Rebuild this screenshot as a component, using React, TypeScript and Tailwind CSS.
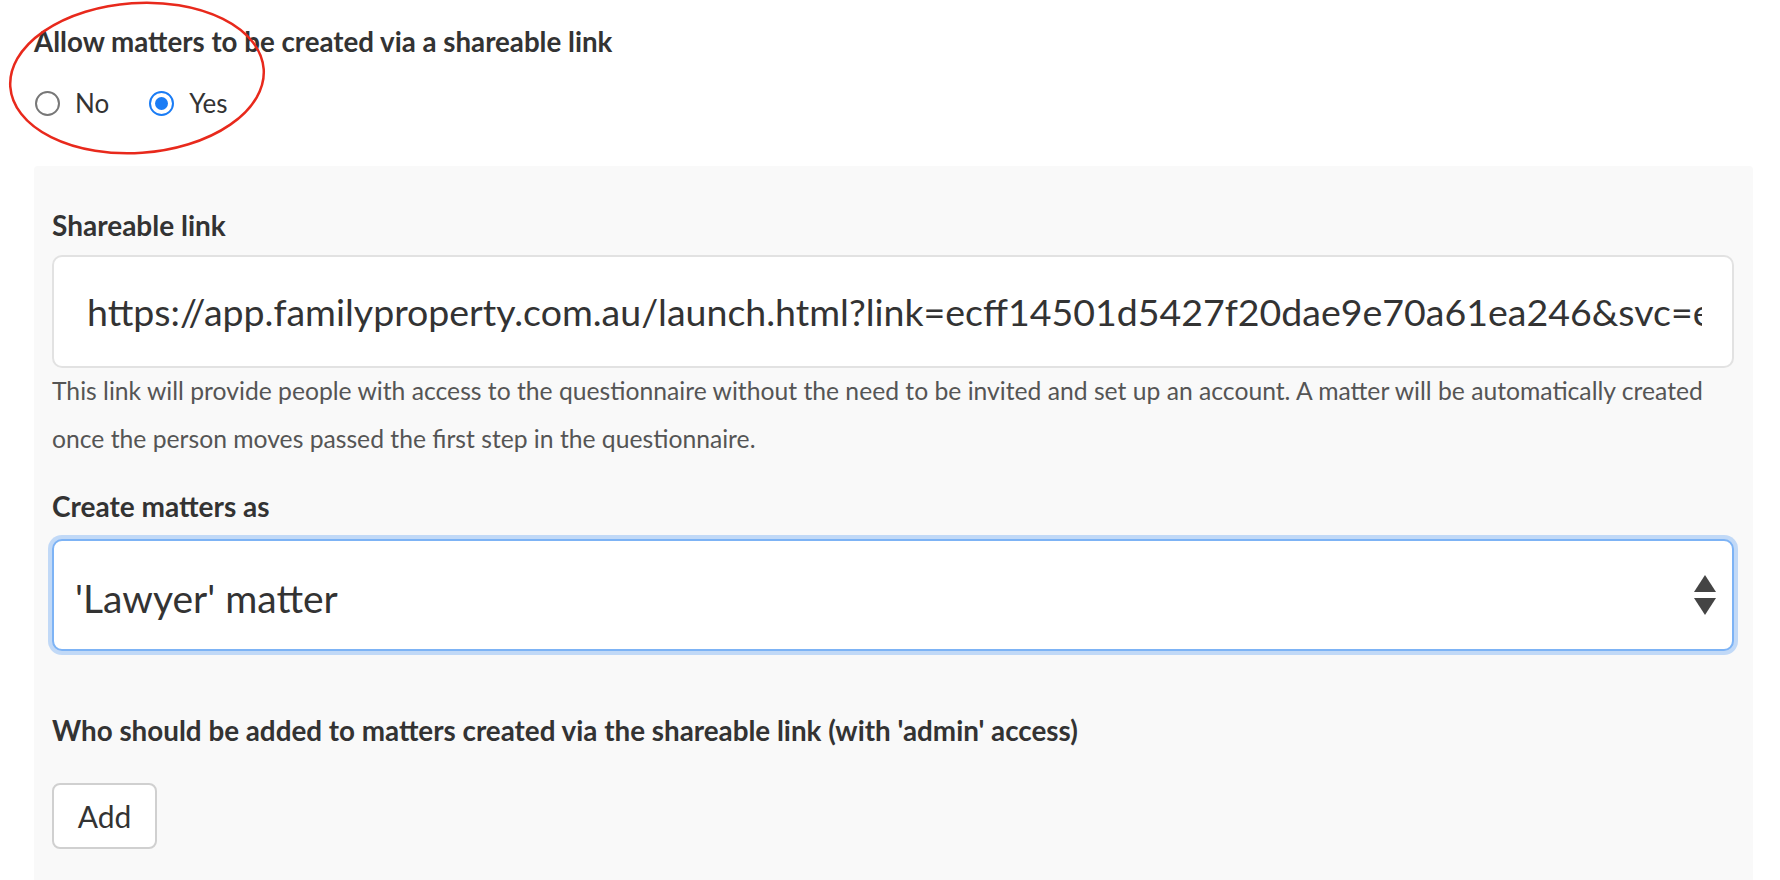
import React from "react"

const font = { fontFamily: "Lato, 'Open Sans', sans-serif" }

const Radio = ({ label, checked }: { label: string; checked?: boolean }) => (
    <label className="flex items-center gap-[15px]">
        {checked ? (
            <span className="w-[25px] h-[25px] rounded-full border-2 border-[#1a7cf5] bg-white flex items-center justify-center">
                <span className="w-[13px] h-[13px] rounded-full bg-[#1a7cf5]" />
            </span>
        ) : (
            <span className="w-[25px] h-[25px] rounded-full border-2 border-[#777] bg-white" />
        )}
        <span className="text-[26px] leading-[30px] text-[#333]">{label}</span>
    </label>
)

const SortArrows = () => (
    <svg width="24" height="40" viewBox="0 0 24 40" className="shrink-0">
        <path d="M12 0 L23 17 L1 17 Z" fill="#444" />
        <path d="M1 23 L23 23 L12 40 Z" fill="#444" />
    </svg>
)

export default function App() {
    const url = "https://app.familyproperty.com.au/launch.html?link=ecff14501d5427f20dae9e70a61ea246&svc=ecff14501d5427"

    return (
        <div className="relative min-h-[880px] bg-white pl-[34px] pr-[27px] pt-[27px] text-[#333]" style={font}>
            {/* annotation ring round the radios */}
            <svg className="absolute left-[6px] top-0 pointer-events-none" width="264" height="160" viewBox="0 0 264 160">
                <ellipse cx="131" cy="78" rx="127" ry="75" fill="none" stroke="#e8291c" strokeWidth="2.5" transform="rotate(-4 131 78)" />
            </svg>

            <h2 className="text-[27.7px] leading-[30px] font-bold">Allow matters to be created via a shareable link</h2>
            <div className="mt-[31px] flex items-center gap-[40px] pl-[1px]">
                <Radio label="No" />
                <Radio label="Yes" checked />
            </div>

            <div className="mt-[48px] bg-[#f9f9f9] rounded-t-[4px] pl-[18px] pr-[19px] pt-[44px] pb-[40px]">
                <h3 className="text-[28px] leading-[30px] font-bold">Shareable link</h3>
                <input
                    readOnly
                    value={url}
                    className="mt-[15px] block w-full h-[113px] rounded-[10px] border-2 border-[#e2e2e2] bg-white pl-[33px] pr-[30px] text-[37.5px] text-[#333] outline-none"
                    style={font}
                />
                <p className="-mt-[1px] text-[24.7px] leading-[48px] text-[#555]">
                    This link will provide people with access to the questionnaire without the need to be invited and set up an account. A matter will be automatically created once the person moves passed the first step in the questionnaire.
                </p>

                <h3 className="mt-[28px] text-[28px] leading-[30px] font-bold">Create matters as</h3>
                <div className="mt-[18px] h-[112px] rounded-[10px] border-2 border-[#7db3f5] bg-white shadow-[0_0_0_4px_rgba(26,124,245,0.25)] flex items-center justify-between pl-[21px] pr-[15px]">
                    <span className="mt-[6px] text-[39px] text-[#333]">'Lawyer' matter</span>
                    <SortArrows />
                </div>

                <h3 className="mt-[65px] text-[27.8px] leading-[30px] font-bold">Who should be added to matters created via the shareable link (with 'admin' access)</h3>
                <button className="mt-[37px] h-[66px] w-[105px] rounded-[8px] border-2 border-[#d0d0d0] bg-white text-[30px] text-[#333]">
                    Add
                </button>
            </div>
        </div>
    )
}
